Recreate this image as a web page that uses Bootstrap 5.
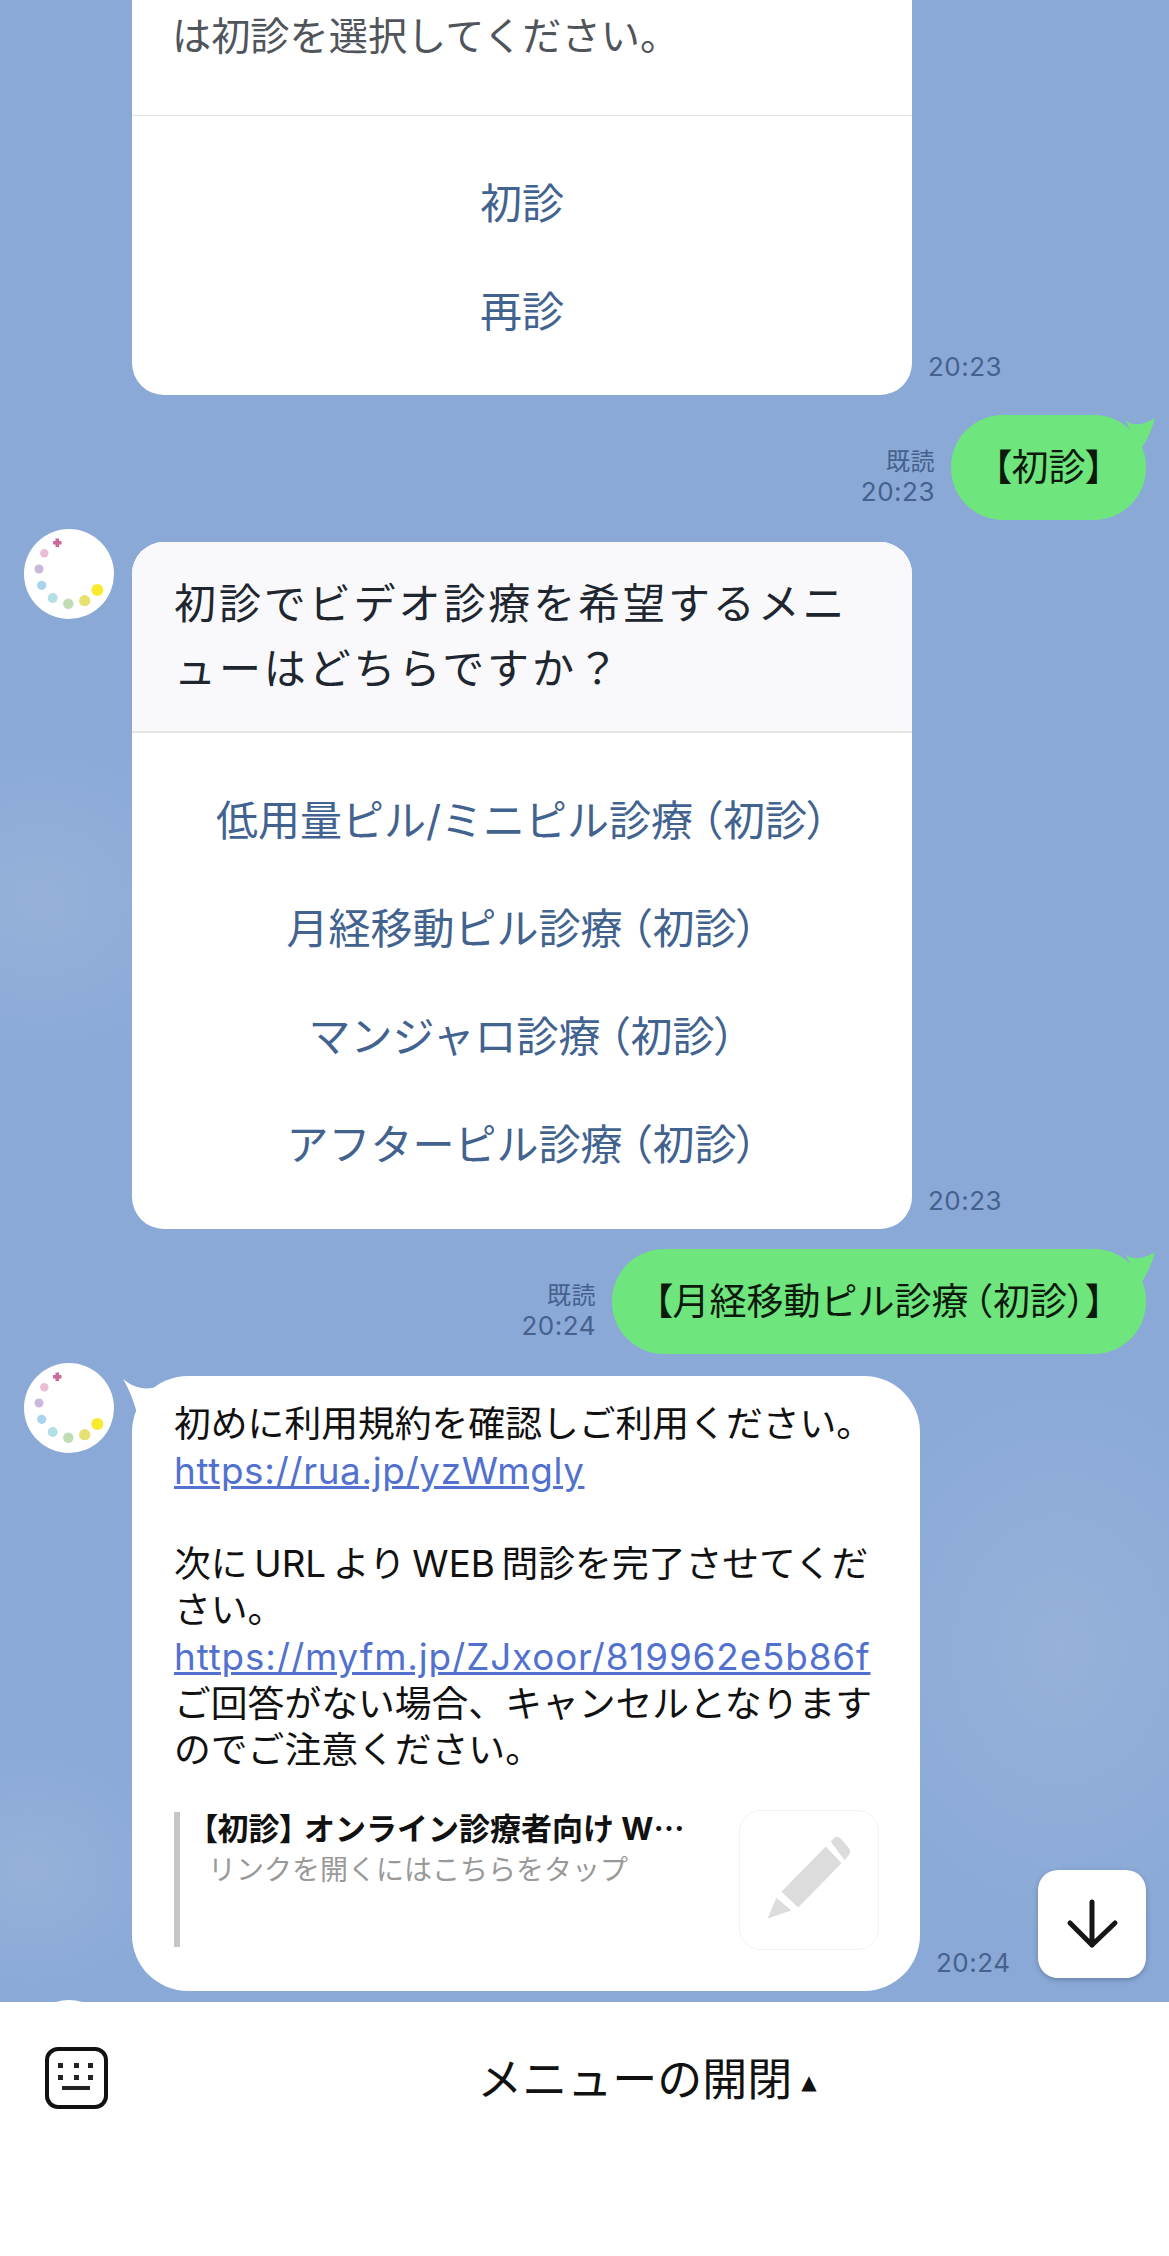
<!DOCTYPE html>
<html lang="ja">
<head>
  <meta charset="UTF-8">
  <title>LINE トーク</title>
  <link href="https://cdn.jsdelivr.net/npm/bootstrap@5.3.0/dist/css/bootstrap.min.css" rel="stylesheet">
  <style>
    html, body {
      height: 2256px;
      overflow: hidden;
    }

    body {
      font-family: "Inter", "Noto Sans CJK JP", sans-serif;
      background: #fff;
      color: #111;
    }

    .chat-area {
      height: 2002px;
      overflow: hidden;
      position: relative;
      background-color: #8aa9d6;
      background-image:
        radial-gradient(ellipse 190px 170px at 40px 900px, rgba(255,255,255,.1), transparent),
        radial-gradient(ellipse 150px 130px at 30px 1870px, rgba(255,255,255,.1), transparent),
        radial-gradient(ellipse 240px 300px at 1060px 1650px, rgba(255,255,255,.1), transparent);
    }

    .chat-stack {
      gap: 9px;
    }

    /* proportional brackets, the reference sets them tight */
    .tight-punct {
      font-feature-settings: "palt";
    }

    .paren-open {
      margin-left: 8px;
      margin-right: 1px;
    }

    .green-bubble .paren-open {
      margin-left: 5px;
    }

    .avatar-icon {
      flex: 0 0 90px;
      width: 90px;
      height: 90px;
      margin-left: 24px;
      margin-right: 18px;
    }

    .msg-in-pad {
      padding-top: 13px;
    }

    .msg-in-pad .avatar-icon {
      margin-top: -13px;
    }

    .flex-card {
      width: 780px;
      border: 0;
      border-radius: 32px;
      overflow: hidden;
      background: #fff;
    }

    .flex-card-first {
      margin-left: 132px;
      height: 395px;
      border-radius: 0 0 32px 32px;
    }

    .flex-head {
      padding: 29px 10px 30px 42px;
      font-size: 42px;
      line-height: 65px;
      letter-spacing: 2.9px;
      color: #20262f;
      background: #f9f9fb;
      border-bottom: 2px solid #e5e5e7;
    }

    .flex-head-plain {
      height: 115px;
      padding: 0 0 0 40px;
      font-size: 39.2px;
      line-height: 72px;
      color: #50545b;
      background: #fff;
    }

    .flex-options {
      padding: 34px 0 30px;
    }

    .flex-card-first .flex-options {
      padding-bottom: 0;
    }

    .flex-option {
      height: 108px;
      font-size: 42px;
      line-height: 108px;
      text-align: center;
      color: #42638f;
      white-space: nowrap;
    }

    .time-label {
      font-size: 26px;
      line-height: 30px;
      letter-spacing: .5px;
      color: #45618c;
    }

    .time-side {
      margin-left: 16px;
      padding-bottom: 13px;
    }

    .msg-out {
      padding-top: 11px;
      padding-right: 23px;
    }

    .read-info {
      margin-right: 16px;
      padding-bottom: 13px;
      text-align: right;
      line-height: 30px;
    }

    .read-info div:first-child {
      font-size: 24px;
    }

    .green-bubble {
      position: relative;
      height: 105px;
      padding: 0 42px;
      border-radius: 52px;
      background: #6fe57d;
      font-size: 37px;
      line-height: 105px;
      white-space: nowrap;
      color: #0c1a0c;
    }

    .tail-out {
      position: absolute;
      top: 0;
      right: -9px;
      width: 40px;
      height: 40px;
    }

    .text-bubble {
      position: relative;
      width: 788px;
      height: 615px;
      padding: 25px 30px 0 42px;
      border-radius: 56px;
      background: #fff;
      font-size: 36.8px;
      line-height: 46.6px;
      color: #111;
    }

    .tail-in {
      position: absolute;
      top: 3px;
      left: -9px;
      width: 50px;
      height: 40px;
    }

    .text-bubble a {
      color: #5271cf;
      letter-spacing: .65px;
    }

    .text-bubble a.link-wide {
      letter-spacing: .88px;
    }

    .preview-row {
      margin-top: 36px;
      height: 140px;
    }

    .preview-bar {
      flex: 0 0 6px;
      height: 135px;
      margin-top: 2px;
      background: #c6c6c6;
    }

    .preview-text {
      width: 496px;
      margin-left: 15px;
    }

    .preview-title {
      margin-left: 7px;
      font-size: 31px;
      line-height: 34px;
      font-weight: 700;
      white-space: nowrap;
      color: #111;
    }

    .title-close {
      margin-right: 9px;
    }

    .title-ellipsis {
      font-family: "Noto Sans CJK JP", sans-serif;
    }

    .preview-sub {
      margin-top: 6px;
      margin-left: 13px;
      font-size: 28px;
      line-height: 36px;
      white-space: nowrap;
      color: #999;
    }

    .preview-thumb {
      width: 140px;
      height: 140px;
      margin-left: 48px;
      border: 1px solid #f3f3f3;
      border-radius: 22px;
    }

    .down-btn {
      position: absolute;
      top: 1870px;
      left: 1038px;
      width: 108px;
      height: 108px;
      border-radius: 20px;
      background: #fff;
      box-shadow: 0 2px 5px rgba(40,60,90,.35);
    }

    .composer {
      height: 254px;
      background: #fff;
    }

    .keyboard-box {
      flex: 0 0 125px;
      padding: 45px 0 0 45px;
    }

    .menu-toggle {
      padding-top: 51px;
      font-size: 45px;
      line-height: 54px;
      color: #111;
    }

    .menu-arrow {
      margin-left: 9px;
      font-size: 20px;
      font-family: "DejaVu Sans", sans-serif;
      vertical-align: 7px;
    }
  </style>
</head>
<body>

<!-- avatar shared by the incoming rows -->
<svg width="0" height="0" class="d-block">
  <defs>
    <g id="avatarGlyph">
      <circle cx="45" cy="45" r="45" fill="#fff"/>
      <path d="M33.3 9.5v8.4M29.1 13.7h8.4" stroke="#c96a9b" stroke-width="3.6"/>
      <circle cx="20.3" cy="24.3" r="4.2" fill="#e9bdd4"/>
      <circle cx="15" cy="40" r="4.5" fill="#c9b8da"/>
      <circle cx="17.7" cy="56.3" r="4.6" fill="#a8d4ee"/>
      <circle cx="28.7" cy="69" r="5" fill="#b4dfe6"/>
      <circle cx="44.3" cy="74.7" r="5.2" fill="#bfdcb4"/>
      <circle cx="60.7" cy="71.7" r="5.6" fill="#e6e070"/>
      <circle cx="73.3" cy="61" r="6" fill="#f8ea2e"/>
    </g>
  </defs>
</svg>

<div class="chat-area">
  <div class="d-flex flex-column chat-stack">

    <div class="d-flex align-items-end">
      <div class="card flex-card flex-card-first">
        <div class="flex-head-plain">は初診を選択してください。</div>
        <div class="border-top flex-options">
          <div class="flex-option">初診</div>
          <div class="flex-option">再診</div>
        </div>
      </div>
      <div class="time-label time-side">20:23</div>
    </div>

    <div class="d-flex justify-content-end align-items-end msg-out">
      <div class="read-info time-label">
        <div>既読</div>
        <div>20:23</div>
      </div>
      <div class="green-bubble">
        <span class="tight-punct">【</span>初診<span class="tight-punct">】</span>
        <svg class="tail-out" viewBox="0 0 40 40"><path d="M10 5 C18 12 28 10 40 3 C37 14 33 24 26 34 Z" fill="#6fe57d"/></svg>
      </div>
    </div>

    <div class="d-flex align-items-start msg-in-pad">
      <svg class="avatar-icon" viewBox="0 0 90 90"><use href="#avatarGlyph"/></svg>
      <div class="card flex-card">
        <div class="flex-head">初診でビデオ診療を希望するメニ<br>ューはどちらですか？</div>
        <div class="flex-options">
          <div class="flex-option">低用量ピル/ミニピル診療<span class="tight-punct paren-open">（</span>初診<span class="tight-punct">）</span></div>
          <div class="flex-option">月経移動ピル診療<span class="tight-punct paren-open">（</span>初診<span class="tight-punct">）</span></div>
          <div class="flex-option">マンジャロ診療<span class="tight-punct paren-open">（</span>初診<span class="tight-punct">）</span></div>
          <div class="flex-option">アフターピル診療<span class="tight-punct paren-open">（</span>初診<span class="tight-punct">）</span></div>
        </div>
      </div>
      <div class="time-label time-side align-self-end">20:23</div>
    </div>

    <div class="d-flex justify-content-end align-items-end msg-out">
      <div class="read-info time-label">
        <div>既読</div>
        <div>20:24</div>
      </div>
      <div class="green-bubble">
        <span class="tight-punct">【</span>月経移動ピル診療<span class="tight-punct paren-open">（</span>初診<span class="tight-punct">）】</span>
        <svg class="tail-out" viewBox="0 0 40 40"><path d="M10 5 C18 12 28 10 40 3 C37 14 33 24 26 34 Z" fill="#6fe57d"/></svg>
      </div>
    </div>

    <div class="d-flex align-items-start msg-in-pad">
      <svg class="avatar-icon" viewBox="0 0 90 90"><use href="#avatarGlyph"/></svg>
      <div class="text-bubble">
        <svg class="tail-in" viewBox="0 0 50 40"><path d="M0 0 C12 10 24 12 40 6 L40 34 L14 34 C10 20 6 10 0 0 Z" fill="#fff"/></svg>
        初めに利用規約を確認しご利用ください。<br>
        <a href="#">https://rua.jp/yzWmgly</a><br>
        <br>
        次に&thinsp;URL&thinsp;より&thinsp;WEB&thinsp;問診を完了させてくだ<br>
        さい。<br>
        <a href="#" class="link-wide">https://myfm.jp/ZJxoor/819962e5b86f</a><br>
        ご回答がない場合、キャンセルとなります<br>
        のでご注意ください。
        <div class="d-flex preview-row">
          <div class="preview-bar"></div>
          <div class="preview-text">
            <div class="preview-title"><span class="tight-punct">【</span>初診<span class="tight-punct title-close">】</span>オンライン診療者向け W<span class="title-ellipsis">…</span></div>
            <div class="preview-sub">リンクを開くにはこちらをタップ</div>
          </div>
          <div class="preview-thumb d-flex align-items-center justify-content-center">
            <svg width="140" height="140" viewBox="0 0 140 140">
              <path d="M28 109 L37 88 L52 101 Z M42 82 L87 36 L103 53 L59 98 Z M92 31 L96 27 Q99 25 102 28 L110 37 Q113 41 111 44 L106 50 Z" fill="#dcdcdc"/>
            </svg>
          </div>
        </div>
      </div>
      <div class="time-label time-side align-self-end">20:24</div>
    </div>

    <div class="d-flex">
      <svg class="avatar-icon" viewBox="0 0 90 90"><use href="#avatarGlyph"/></svg>
    </div>

  </div>

  <div class="down-btn d-flex align-items-center justify-content-center">
    <svg width="60" height="60" viewBox="0 0 60 60" fill="none" stroke="#161616" stroke-width="5" stroke-linecap="round" stroke-linejoin="round">
      <path d="M30 8V51M8 29L30 51L53 29"/>
    </svg>
  </div>
</div>

<div class="composer d-flex">
  <div class="keyboard-box">
    <svg width="64" height="62" viewBox="0 0 64 62" fill="none">
      <rect x="2" y="2" width="59" height="58" rx="11" stroke="#111" stroke-width="4"/>
      <path d="M13 16h5v5h-5zM29 16h5v5h-5zM43 16h5v5h-5zM13 28h5v5h-5zM29 28h5v5h-5zM43 28h5v5h-5zM17 39h28v4H17z" fill="#222"/>
    </svg>
  </div>
  <div class="flex-grow-1 text-center menu-toggle">メニューの開閉<span class="menu-arrow">▲</span></div>
</div>

</body>
</html>
